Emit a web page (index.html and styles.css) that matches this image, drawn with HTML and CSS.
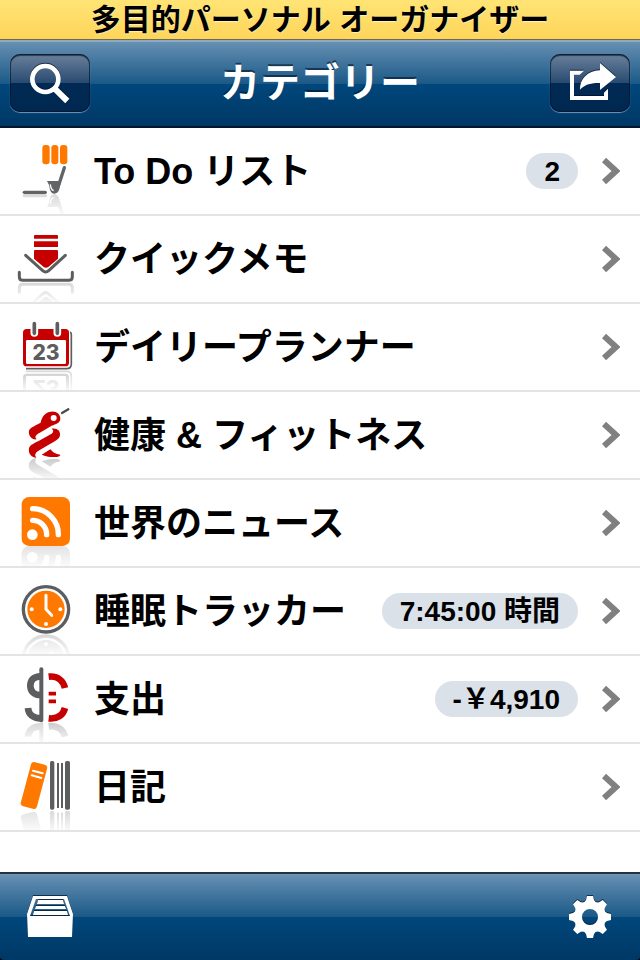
FILE: index.html
```
<!DOCTYPE html>
<html lang="ja">
<head>
    <meta charset="UTF-8">
    <meta name="viewport" content="width=device-width, initial-scale=1.0">
    <title>カテゴリー</title>
    <link rel="stylesheet" href="styles.css">
</head>
<body>
<div class="banner">多目的パーソナル オーガナイザー</div>

<header class="navbar">
    <button class="nav-button" type="button" aria-label="検索">
        <svg viewBox="0 0 240 174">
            <circle cx="106" cy="75" r="39" fill="none" stroke="#fff" stroke-width="14"/>
            <path d="M134 104L172 141" stroke="#fff" stroke-width="18"/>
        </svg>
    </button>
    <h1>カテゴリー</h1>
    <button class="nav-button" type="button" aria-label="共有">
        <svg viewBox="0 0 240 174" fill="#fff">
            <path d="M102 50H60V138H174V104L162 116V126H72V62H89Z"/>
            <path d="M150 27L198 69L150 108V87C122 86 104 92 90 107C89 75 112 51 150 49Z"/>
        </svg>
    </button>
</header>

<!-- 反射用のマスク -->
<svg class="defs" width="0" height="0" aria-hidden="true">
    <defs>
        <linearGradient id="fade" gradientUnits="userSpaceOnUse" x1="0" y1="192" x2="0" y2="258">
            <stop offset="0" stop-color="#fff" stop-opacity="0.25"/>
            <stop offset="1" stop-color="#fff" stop-opacity="0.02"/>
        </linearGradient>
        <mask id="reflect" maskUnits="userSpaceOnUse" x="0" y="192" width="252" height="62">
            <rect x="0" y="192" width="252" height="62" fill="url(#fade)"/>
        </mask>
    </defs>
</svg>

<main>
    <ul class="list">
        <li>
            <a href="#todo">
                <svg class="icon" viewBox="0 -6 252 258" aria-hidden="true">
                    <g id="i-todo">
                        <g fill="#ff7800">
                            <rect x="127" y="45" width="22" height="58" rx="9"/>
                            <rect x="154" y="45" width="21" height="58" rx="9"/>
                            <rect x="180" y="45" width="22" height="58" rx="9"/>
                        </g>
                        <path d="M73 187H136" stroke="#636466" stroke-width="10" stroke-linecap="round"/>
                        <path d="M193 113L177 163" stroke="#636466" stroke-width="10" stroke-linecap="round"/>
                        <path d="M141 153L182 153C181 170 178 191 163 191C151 191 150 178 147 165Z" fill="#636466"/>
                        <path d="M151 163C152 173 155 180 161 182" fill="none" stroke="#fff" stroke-width="4"/>
                    </g>
                    <g mask="url(#reflect)"><use class="mirror" href="#i-todo" transform="matrix(1 0 0 -1 0 384)"/></g>
                </svg>
                <span class="name">To Do リスト</span>
                <span class="badge">2</span>
                <svg class="chevron" viewBox="0 0 18 28" aria-hidden="true"><path d="M2 3L14 14L2 25"/></svg>
            </a>
        </li>
        <li>
            <a href="#memo">
                <svg class="icon" viewBox="0 -6 252 258" aria-hidden="true">
                    <g id="i-memo">
                        <path d="M104 51H172L174 53V62H102V53ZM102 70H174V87H102ZM104 96H172L174 98V122L145 147Q138 151 131 147L102 122V98Z" fill="#c60000"/>
                        <path d="M77 112L128 158Q137 166 146 158L196 112" fill="none" stroke="#5c5d5f" stroke-width="9" stroke-linecap="round"/>
                        <path d="M58 163V176Q58 187 69 187H206Q217 187 217 176V163" fill="none" stroke="#5c5d5f" stroke-width="9" stroke-linecap="round"/>
                    </g>
                    <g mask="url(#reflect)"><use class="mirror" href="#i-memo" transform="matrix(1 0 0 -1 0 386)"/></g>
                </svg>
                <span class="name">クイックメモ</span>
                <svg class="chevron" viewBox="0 0 18 28" aria-hidden="true"><path d="M2 3L14 14L2 25"/></svg>
            </a>
        </li>
        <li>
            <a href="#planner">
                <svg class="icon" viewBox="0 -6 252 258" aria-hidden="true">
                    <g id="i-planner">
                        <path d="M208 78Q214 78 214 86V174Q214 188 200 188H78" fill="none" stroke="#5c5d5f" stroke-width="5"/>
                        <rect x="66" y="66" width="144" height="118" rx="13" fill="#fff"/>
                        <rect x="69" y="69" width="138" height="112" rx="11" fill="#c60000"/>
                        <rect x="78" y="102" width="120" height="72" rx="4" fill="#fff"/>
                        <path d="M103 60V81M172 60V81" stroke="#fff" stroke-width="23" stroke-linecap="round"/>
                        <path d="M103 53V82M172 53V82" stroke="#5c5d5f" stroke-width="11" stroke-linecap="round"/>
                        <text class="icon-date" x="138" y="162" text-anchor="middle">23</text>
                    </g>
                    <g mask="url(#reflect)"><use class="mirror" href="#i-planner" transform="matrix(1 0 0 -1 0 384)"/></g>
                </svg>
                <span class="name">デイリープランナー</span>
                <svg class="chevron" viewBox="0 0 18 28" aria-hidden="true"><path d="M2 3L14 14L2 25"/></svg>
            </a>
        </li>
        <li>
            <a href="#health">
                <svg class="icon" viewBox="0 -6 252 258" aria-hidden="true">
                    <g id="i-health">
                        <g fill="#c60000">
                            <path d="M147 54C165 48 182 58 181 75C180 87 168 91 155 95L118 117C105 124 104 130 110 136C96 138 84 125 87 110C90 100 106 95 122 86C124 74 132 58 147 54Z"/>
                            <path d="M155 104C172 101 182 112 180 124C178 136 165 142 150 150L118 169C105 176 103 184 109 191C94 191 84 178 87 163C90 152 105 147 120 139L152 121C161 115 162 109 155 104Z"/>
                            <path d="M125 182L151 166C158 173 162 179 181 182C180 189 170 189 160 189C145 189 137 186 125 182Z"/>
                        </g>
                        <circle cx="161" cy="72" r="9" fill="#fff"/>
                        <path d="M186 57L205 46" stroke="#4a4b4d" stroke-width="7" stroke-linecap="round"/>
                    </g>
                    <g mask="url(#reflect)"><use class="mirror" href="#i-health" transform="matrix(1 0 0 -1 0 384)"/></g>
                </svg>
                <span class="name">健康 &amp; フィットネス</span>
                <svg class="chevron" viewBox="0 0 18 28" aria-hidden="true"><path d="M2 3L14 14L2 25"/></svg>
            </a>
        </li>
        <li>
            <a href="#news">
                <svg class="icon" viewBox="0 -6 252 258" aria-hidden="true">
                    <g id="i-news">
                        <rect x="65" y="45" width="145" height="147" rx="22" fill="#ff7800"/>
                        <circle cx="97" cy="158" r="16" fill="#fff"/>
                        <path d="M98 115A42 42 0 0 1 140 158M98 80A77 77 0 0 1 175 158" fill="none" stroke="#fff" stroke-width="16" stroke-linecap="round"/>
                    </g>
                    <g mask="url(#reflect)"><use class="mirror" href="#i-news" transform="matrix(1 0 0 -1 0 384)"/></g>
                </svg>
                <span class="name">世界のニュース</span>
                <svg class="chevron" viewBox="0 0 18 28" aria-hidden="true"><path d="M2 3L14 14L2 25"/></svg>
            </a>
        </li>
        <li>
            <a href="#sleep">
                <svg class="icon" viewBox="0 -6 252 258" aria-hidden="true">
                    <g id="i-sleep">
                        <circle cx="138" cy="118" r="68" fill="#fff" stroke="#5c5d5f" stroke-width="10"/>
                        <circle cx="138" cy="118" r="56" fill="#ff7800"/>
                        <path d="M138 76V118L155 136" fill="none" stroke="#fff" stroke-width="9" stroke-linecap="round" stroke-linejoin="round"/>
                        <g fill="#fff">
                            <circle cx="95" cy="118" r="6"/>
                            <circle cx="181" cy="118" r="6"/>
                            <circle cx="138" cy="162" r="6"/>
                        </g>
                    </g>
                    <g mask="url(#reflect)"><use class="mirror" href="#i-sleep" transform="matrix(1 0 0 -1 0 384)"/></g>
                </svg>
                <span class="name">睡眠トラッカー</span>
                <span class="badge">7:45:00 時間</span>
                <svg class="chevron" viewBox="0 0 18 28" aria-hidden="true"><path d="M2 3L14 14L2 25"/></svg>
            </a>
        </li>
        <li>
            <a href="#expense">
                <svg class="icon" viewBox="0 -6 252 258" aria-hidden="true">
                    <g id="i-expense" fill="none" stroke-width="20">
                        <g stroke="#5c5d5f">
                            <path d="M122 55C101 55 91 67 91 83C91 99 101 111 122 111"/>
                            <path d="M84 150C85 168 99 181 122 181"/>
                            <path d="M124 34V187" stroke-width="12" stroke-linecap="round"/>
                        </g>
                        <g stroke="#c60000">
                            <path d="M146 56C172 53 189 67 195 90"/>
                            <path d="M146 181C172 184 189 172 195 150"/>
                            <path d="M146 107H168M146 130H168" stroke-width="11"/>
                        </g>
                    </g>
                    <g mask="url(#reflect)"><use class="mirror" href="#i-expense" transform="matrix(1 0 0 -1 0 386)"/></g>
                </svg>
                <span class="name">支出</span>
                <span class="badge">-￥4,910</span>
                <svg class="chevron" viewBox="0 0 18 28" aria-hidden="true"><path d="M2 3L14 14L2 25"/></svg>
            </a>
        </li>
        <li>
            <a href="#diary">
                <svg class="icon" viewBox="0 -6 252 258" aria-hidden="true">
                    <g id="i-diary">
                        <rect x="77" y="50" width="50" height="137" rx="10" fill="#ff7800" transform="rotate(15 102 118)"/>
                        <path d="M99 74L128 82M95 88L124 96" stroke="#fff" stroke-width="6" stroke-linecap="round"/>
                        <g fill="#5c5d5f">
                            <rect x="150" y="45" width="13" height="146" rx="5"/>
                            <rect x="171" y="51" width="6" height="135"/>
                            <rect x="183" y="51" width="6" height="135"/>
                            <rect x="195" y="45" width="15" height="146" rx="5"/>
                        </g>
                    </g>
                    <g mask="url(#reflect)"><use class="mirror" href="#i-diary" transform="matrix(1 0 0 -1 0 386)"/></g>
                </svg>
                <span class="name">日記</span>
                <svg class="chevron" viewBox="0 0 18 28" aria-hidden="true"><path d="M2 3L14 14L2 25"/></svg>
            </a>
        </li>
    </ul>
</main>

<footer class="toolbar">
    <button class="tool" type="button" aria-label="アーカイブ">
        <svg width="48" height="44" viewBox="0 0 48 44">
            <path fill="#fff" fill-rule="evenodd" d="M7 1H41L47 19L46 42H2L1 19ZM10 4L4 21H44L38 4Z"/>
            <path fill="#fff" d="M12 5H37L38 9H11ZM10 11H39L40 14H9ZM8 16H41L42 20H7Z"/>
        </svg>
    </button>
    <button class="tool" type="button" aria-label="設定">
        <svg width="44" height="44" viewBox="-22 -22 44 44">
            <circle r="12" fill="none" stroke="#fff" stroke-width="8"/>
            <g fill="#fff">
                <path id="tooth" d="M-7 -13L-4 -17L-3 -21H3L4 -17L7 -13Z"/>
                <use href="#tooth" transform="rotate(45)"/>
                <use href="#tooth" transform="rotate(90)"/>
                <use href="#tooth" transform="rotate(135)"/>
                <use href="#tooth" transform="rotate(180)"/>
                <use href="#tooth" transform="rotate(225)"/>
                <use href="#tooth" transform="rotate(270)"/>
                <use href="#tooth" transform="rotate(315)"/>
            </g>
        </svg>
    </button>
</footer>
</body>
</html>
```

FILE: styles.css
```
* {
    box-sizing: border-box;
}
body {
    margin: 0;
    min-height: 100vh;
    display: flex;
    flex-direction: column;
    background-color: #000;
    color: #000;
    font-family: "Liberation Sans", "Noto Sans CJK JP", sans-serif;
    font-weight: bold;
}
button {
    border: none;
    padding: 0;
    background: none;
    cursor: pointer;
}
svg {
    display: block;
}
.defs {
    position: absolute;
}
.banner {
    height: 40px;
    line-height: 40px;
    text-align: center;
    font-size: 30px;
    background: linear-gradient(#ffe475, #fed55a);
    border-bottom: 1px solid #6d6a52;
    text-shadow: 0 1px 1px rgba(255, 255, 255, 0.6);
}
.navbar {
    display: flex;
    align-items: center;
    justify-content: space-between;
    height: 88px;
    padding: 0 10px 2px;
    background: linear-gradient(#668fb2, #1a5987 50%, #00477c 50%, #003865);
    border-top: 2px solid #8faabf;
    border-bottom: 2px solid #02172b;
}
.navbar h1 {
    margin: 0;
    font-size: 40px;
    line-height: 60px;
    color: #fff;
    text-shadow: 0 -2px 0 rgba(0, 20, 40, 0.6);
}
.nav-button {
    width: 80px;
    height: 58px;
    border-radius: 10px;
    background: linear-gradient(#6b819c, #284a70 50%, #002a55 50%, #002850);
    box-shadow: inset 0 0 0 1px rgba(0, 15, 35, 0.6), inset 0 2px 1px rgba(0, 15, 35, 0.6), 0 1px 1px rgba(160, 190, 215, 0.7);
}
.nav-button svg,
.tool svg {
    filter: drop-shadow(0 -1px 0 rgba(0, 15, 35, 0.7));
}
main {
    flex: 1;
    background-color: #fff;
}
.list {
    margin: 0;
    padding: 0;
    list-style: none;
}
.list li {
    border-bottom: 2px solid #e4e4e4;
}
.list a {
    display: flex;
    align-items: center;
    height: 86px;
    padding-right: 20px;
    color: #000;
    text-decoration: none;
}
.icon {
    width: 84px;
    height: 86px;
    flex: none;
}
.icon-date {
    font-family: Inter, sans-serif;
    font-size: 63px;
    font-weight: 800;
    fill: #5c5d5f;
}
.mirror {
    filter: grayscale(1);
}
.name {
    flex: 1;
    padding: 2px 0 0 10px;
    font-size: 36px;
    line-height: 48px;
    white-space: nowrap;
}
.badge {
    height: 36px;
    line-height: 38px;
    padding: 0 18px;
    border-radius: 18px;
    background-color: #dbe1e9;
    font-size: 28px;
    white-space: nowrap;
}
.chevron {
    width: 18px;
    height: 28px;
    margin-left: 24px;
    fill: none;
    stroke: #808080;
    stroke-width: 6px;
}
.toolbar {
    display: flex;
    align-items: center;
    justify-content: space-between;
    height: 88px;
    padding: 0 28px 0 26px;
    background: linear-gradient(#6891b4, #1a5987 50%, #00477c 50%, #003865);
    border-top: 2px solid #1d3348;
    border-radius: 0 0 4px 4px;
    box-shadow: inset 0 1px 0 #7d94a8;
}
```
